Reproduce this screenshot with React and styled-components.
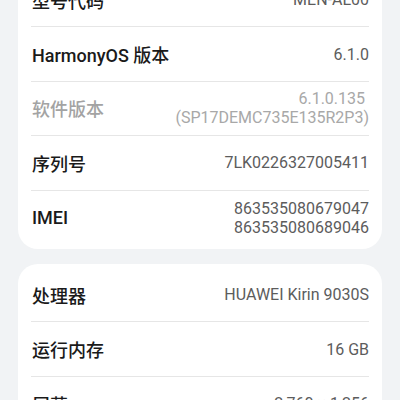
import React from 'react';
import styled, { createGlobalStyle } from 'styled-components';

const GlobalStyle = createGlobalStyle`
  html, body {
    margin: 0;
    padding: 0;
    background: #f1f3f5;
  }
  body {
    font-family: Roboto, "Noto Sans CJK SC", sans-serif;
    overflow: hidden;
  }
`;

const Page = styled.div`
  display: flex;
  flex-direction: column;
  gap: 15px;
  padding: 0 18px;
  margin-top: -31px;
`;

const Card = styled.div`
  background: #ffffff;
  border-radius: 20px;
  padding: 4px 13px;
`;

const Row = styled.div`
  display: flex;
  align-items: center;
  justify-content: space-between;
  gap: 12px;
  min-height: 54.4px;
  box-sizing: border-box;
  border-bottom: 1px solid #e6e6e6;

  &:last-child {
    border-bottom: none;
  }
`;

const Label = styled.div`
  font-family: Roboto, "Noto Sans CJK SC", sans-serif;
  font-size: 18px;
  font-weight: 500;
  color: ${p => (p.$muted ? '#a3a3a3' : '#1a1a1a')};
  white-space: nowrap;
  padding-left: 1px;
`;

const Value = styled.div`
  font-family: Roboto, "Noto Sans CJK SC", sans-serif;
  font-size: 16px;
  line-height: 19px;
  color: ${p => (p.$muted ? '#a8a8a8' : '#5c5c5c')};
  text-align: right;
  white-space: nowrap;
`;

const info = [
  [
    { label: '型号代码', value: ['MEN-AL00'] },
    { label: 'HarmonyOS 版本', value: ['6.1.0'] },
    { label: '软件版本', value: ['6.1.0.135\u00a0', '(SP17DEMC735E135R2P3)'], muted: true },
    { label: '序列号', value: ['7LK0226327005411'] },
    { label: 'IMEI', value: ['863535080679047', '863535080689046'] },
  ],
  [
    { label: '处理器', value: ['HUAWEI Kirin 9030S'] },
    { label: '运行内存', value: ['16 GB'] },
    { label: '屏幕', value: ['2,760 × 1,256'] },
  ],
];

export default function App() {
  return (
    <>
      <GlobalStyle />
      <Page>
        {info.map((group, gi) => (
          <Card key={gi}>
            {group.map(item => (
              <Row key={item.label}>
                <Label $muted={item.muted}>{item.label}</Label>
                <Value $muted={item.muted}>
                  {item.value.map(line => (
                    <div key={line}>{line}</div>
                  ))}
                </Value>
              </Row>
            ))}
          </Card>
        ))}
      </Page>
    </>
  );
}
